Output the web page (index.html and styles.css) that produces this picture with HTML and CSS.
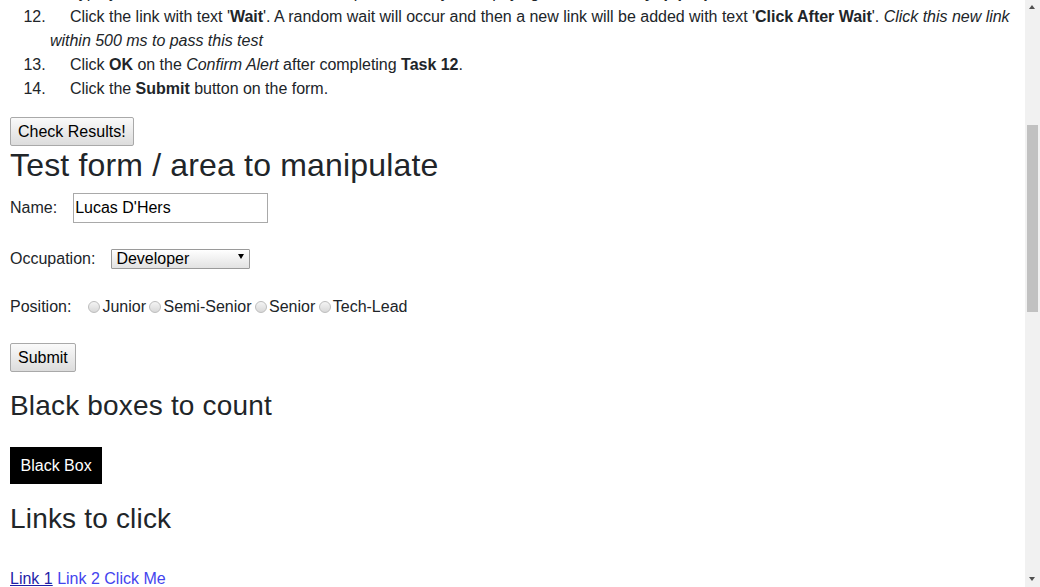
FILE: index.html
```html
<!DOCTYPE html>
<html lang="en">
<head>
<meta charset="utf-8">
<title>Test page</title>
<link rel="stylesheet" href="styles.css">
</head>
<body>
<main class="page">
  <ol class="tasks" start="11">
    <li>Type your name in the <b>Name</b> field, then press the keys and paying attention to <b>keyup proper</b> event.</li>
    <li>Click the link with text '<b>Wait</b>'. A random wait will occur and then a new link will be added with text '<b>Click After Wait</b>'. <i>Click this new link within 500 ms to pass this test</i></li>
    <li>Click <b>OK</b> on the <i>Confirm Alert</i> after completing <b>Task 12</b>.</li>
    <li>Click the <b>Submit</b> button on the form.</li>
  </ol>
  <button class="btn" type="button">Check Results!</button>
  <h1 class="title">Test form / area to manipulate</h1>
  <form class="test-form">
    <div class="row row-name">
      <label class="lbl" for="name">Name:</label>
      <input class="text-input" id="name" type="text" value="Lucas D'Hers">
    </div>
    <div class="row row-occ">
      <label class="lbl" for="occ">Occupation:</label>
      <span class="select-wrap">
        <select class="select" id="occ"><option>Developer</option><option>Tester</option></select>
      </span>
    </div>
    <div class="row row-pos">
      <span class="lbl lbl-pos">Position:</span>
      <label class="radio-opt"><input class="radio" type="radio" name="pos">Junior</label>
      <label class="radio-opt"><input class="radio" type="radio" name="pos">Semi-Senior</label>
      <label class="radio-opt"><input class="radio" type="radio" name="pos">Senior</label>
      <label class="radio-opt"><input class="radio" type="radio" name="pos">Tech-Lead</label>
    </div>
    <button class="btn btn-submit" type="button">Submit</button>
  </form>
  <h2 class="sub">Black boxes to count</h2>
  <div class="black-box">Black Box</div>
  <h2 class="sub sub-links">Links to click</h2>
  <div class="links">
    <a class="link visited" href="#">Link 1</a> <a class="link" href="#">Link 2</a> <a class="link" href="#">Click Me</a>
  </div>
</main>
<div class="scrollbar">
  <span class="arrow arrow-up"></span>
  <span class="thumb"></span>
  <span class="arrow arrow-down"></span>
</div>
</body>
</html>
```
FILE: styles.css
```css
html, body {
  margin: 0;
  padding: 0;
  overflow: hidden;
  background: #fff;
}
body {
  font-family: "Liberation Sans", Arial, sans-serif;
  font-size: 16px;
  line-height: 24px;
  color: #212529;
}
.page {
  padding: 0 25px 0 10px;
}
.tasks {
  margin: -19px 0 16px 0;
  padding-left: 40px;
  letter-spacing: -0.02px;
}
.tasks li {
  text-indent: 20px;
  padding-left: 0;
}
.tasks li::marker {
  color: #212529;
}
.tasks b { font-weight: bold; }
.btn {
  display: block;
  height: 29px;
  padding: 0 7px;
  margin: 0;
  font-family: "Liberation Sans", Arial, sans-serif;
  font-size: 16px;
  line-height: 27px;
  color: #000;
  background: linear-gradient(#fafafa, #dcdcdc);
  border: 1px solid #a9a9a9;
  border-radius: 2px;
}
.title {
  margin: 0 0 9px 0;
  font-size: 32px;
  font-weight: normal;
  line-height: 1.2;
  letter-spacing: 0.17px;
  color: #212529;
}
.test-form {
  margin: 0;
}
.row {
  display: flex;
  align-items: center;
}
.row-name {
  height: 30px;
  margin-top: 0;
  margin-bottom: 23px;
}
.row-occ {
  height: 25px;
  margin-bottom: 24px;
}
.row-pos {
  height: 24px;
  margin-bottom: 24px;
}
.lbl {
  margin-right: 16px;
}
.lbl-pos {
  margin-right: 17px;
}
.text-input {
  box-sizing: border-box;
  width: 195px;
  height: 30px;
  margin: 0;
  padding: 0 0 0 1px;
  font-family: "Liberation Sans", Arial, sans-serif;
  font-size: 16px;
  color: #000;
  border: 1px solid #a9a9a9;
  border-radius: 0;
  outline: none;
}
.select-wrap {
  position: relative;
  display: inline-block;
}
.select {
  -webkit-appearance: none;
  appearance: none;
  box-sizing: border-box;
  width: 139px;
  height: 20px;
  margin: 0;
  padding: 0 0 0 4px;
  font-family: "Liberation Sans", Arial, sans-serif;
  font-size: 16px;
  line-height: 18px;
  color: #000;
  background: linear-gradient(#ffffff, #e2e2e2);
  border: 1px solid #9a9a9a;
  border-radius: 1px;
}
.select-wrap::after {
  content: "";
  position: absolute;
  right: 6px;
  top: 7px;
  border-left: 3px solid transparent;
  border-right: 3px solid transparent;
  border-top: 5px solid #000;
  pointer-events: none;
}
.radio-opt {
  display: inline-flex;
  align-items: center;
  margin-right: 3.5px;
}
.radio {
  -webkit-appearance: none;
  appearance: none;
  box-sizing: border-box;
  width: 12px;
  height: 12px;
  margin: 0 2px 0 0;
  border: 1px solid #bdbdbd;
  border-radius: 50%;
  background: linear-gradient(#f4f4f4, #d8d8d8);
}
.sub {
  margin: 17px 0 24px 0;
  font-size: 28px;
  font-weight: normal;
  line-height: 1.2;
  letter-spacing: 0.18px;
  color: #212529;
}
.black-box {
  display: inline-block;
  padding: 10px 10.5px;
  line-height: 17px;
  color: #fff;
  background: #000;
}
.sub-links {
  margin: 18px 0 31px 0;
}
.links {
  line-height: 24px;
}
.link {
  color: #4444ee;
  text-decoration: none;
}
.link.visited {
  color: #1f1fa8;
  text-decoration: underline;
}
.scrollbar {
  position: fixed;
  top: 0;
  right: 0;
  width: 15px;
  height: 100%;
  background: #f1f1f1;
}
.thumb {
  position: absolute;
  left: 2px;
  top: 125px;
  width: 11px;
  height: 187px;
  background: #c1c1c1;
}
.arrow {
  position: absolute;
  left: 4px;
  width: 0;
  height: 0;
  border-left: 3.5px solid transparent;
  border-right: 3.5px solid transparent;
}
.arrow-up {
  top: 5px;
  border-bottom: 4px solid #505050;
}
.arrow-down {
  bottom: 6px;
  border-top: 4px solid #505050;
}
```
